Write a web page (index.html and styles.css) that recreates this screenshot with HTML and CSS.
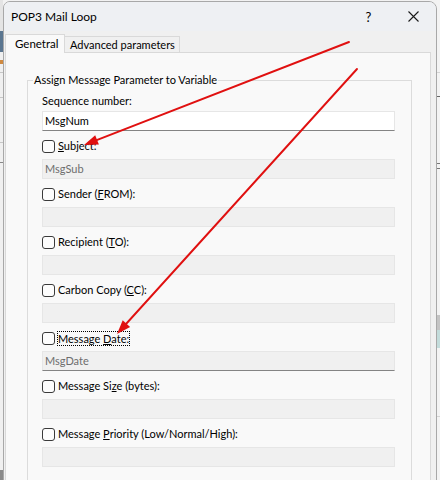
FILE: index.html
```html
<!DOCTYPE html>
<html>
<head>
<meta charset="utf-8">
<link rel="stylesheet" href="styles.css">
</head>
<body>
<div class="desk">
  <div class="dialog">
    <div class="titlebar">
      <span class="title">POP3 Mail Loop</span>
      <span class="tbtn help">?</span>
      <span class="tbtn close"><svg width="11" height="11" viewBox="0 0 11 11"><path d="M0.5 0.5 L10.5 10.5 M10.5 0.5 L0.5 10.5" stroke="#1a1a1a" stroke-width="1.1" fill="none"/></svg></span>
    </div>
    <div class="body">
      <div class="tabs">
        <div class="tab active">Genetral</div>
        <div class="tab">Advanced parameters</div>
      </div>
      <div class="panel">
        <fieldset class="group">
          <legend>Assign Message Parameter to Variable</legend>
          <div class="fields">
            <div class="label">Sequence number:</div>
            <div class="input enabled">MsgNum</div>

            <div class="check"><span class="box"></span><span><u>S</u>ubject:</span></div>
            <div class="input disabled">MsgSub</div>

            <div class="check"><span class="box"></span><span>Sender (<u>F</u>ROM):</span></div>
            <div class="input disabled"></div>

            <div class="check"><span class="box"></span><span>Recipient (<u>T</u>O):</span></div>
            <div class="input disabled"></div>

            <div class="check"><span class="box"></span><span>Carbon Copy (<u>C</u>C):</span></div>
            <div class="input disabled"></div>

            <div class="check"><span class="box"></span><span class="focus">Message <u>D</u>ate:</span></div>
            <div class="input disabled dark">MsgDate</div>

            <div class="check"><span class="box"></span><span>Message Si<u>z</u>e (bytes):</span></div>
            <div class="input disabled"></div>

            <div class="check"><span class="box"></span><span>Message <u>P</u>riority (Low/Normal/High):</span></div>
            <div class="input disabled"></div>
          </div>
        </fieldset>
      </div>
    </div>
  </div>
  <svg class="arrows" width="440" height="480" viewBox="0 0 440 480">
    <g stroke="#e01010" stroke-width="1.9" fill="none" stroke-linecap="round">
      <line x1="349" y1="42" x2="96" y2="140.4"/>
      <line x1="357" y1="69" x2="126" y2="324"/>
    </g>
    <g fill="#e01010">
      <polygon points="84,145 98.9,144.6 95.2,135.3"/>
      <polygon points="117,334 130.1,327 122.7,320.3"/>
    </g>
  </svg>
</div>
</body>
</html>
```

FILE: styles.css
```css
html, body {
  margin: 0;
  padding: 0;
}
body {
  font-family: Lato, "Noto Sans", sans-serif;
  font-size: 11px;
  color: #000;
  background: #e9e9e9;
}
.desk {
  position: relative;
  width: 440px;
  height: 480px;
  overflow: hidden;
  background: #f2f2f2;
  padding: 1px 0 0 3px;
  box-sizing: border-box;
}
.desk::before {
  content: "";
  position: absolute;
  left: 0;
  top: 0;
  width: 3px;
  height: 480px;
  background: linear-gradient(to bottom,
    #e4e4e4 0, #e4e4e4 31px,
    #5b7690 31px, #5b7690 52px,
    #f0f0f0 52px, #f0f0f0 60px,
    #d08a40 60px, #d08a40 64px,
    #f0f0f0 64px, #f0f0f0 72px,
    #c6c6c6 72px, #c6c6c6 73px,
    #f0f0f0 73px, #f0f0f0 97px,
    #c6c6c6 97px, #c6c6c6 98px,
    #f0f0f0 98px, #f0f0f0 142px,
    #c6c6c6 142px, #c6c6c6 143px,
    #f0f0f0 143px, #f0f0f0 162px,
    #888 162px, #888 163px,
    #f0f0f0 163px, #f0f0f0 470px,
    #8a8a8a 470px);
}
.desk::after {
  content: "";
  position: absolute;
  right: 0;
  top: 0;
  width: 3px;
  height: 480px;
  background: linear-gradient(to bottom,
    #f3f3f3 0, #f3f3f3 72px,
    #d4d4d4 72px, #d4d4d4 73px,
    #f3f3f3 73px, #f3f3f3 96px,
    #666 96px, #666 97px,
    #f3f3f3 97px, #f3f3f3 163px,
    #777 163px, #777 164px,
    #f3f3f3 164px, #f3f3f3 168px,
    #777 168px, #777 169px,
    #f3f3f3 169px, #f3f3f3 315px,
    #c4c4c4 315px, #c4c4c4 330px,
    #c3dcdb 330px, #c3dcdb 348px,
    #f3f3f3 348px, #f3f3f3 416px,
    #d4d4d4 416px, #d4d4d4 417px,
    #f3f3f3 417px);
}
.dialog {
  position: relative;
  z-index: 1;
  width: 434px;
  height: 500px;
  box-sizing: border-box;
  border: 1px solid #a8a8a8;
  border-radius: 7px 8px 0 0;
  background: #f0f0f0;
  overflow: hidden;
}
.titlebar {
  height: 29px;
  display: flex;
  align-items: center;
  padding-left: 7px;
  background: #eef0f3;
}
.title {
  font-size: 12px;
  flex: 1;
}
.tbtn {
  width: 45px;
  height: 29px;
  display: flex;
  align-items: center;
  justify-content: center;
}
.help {
  font-size: 13px;
}
.body {
  padding: 3px 0 0 1px;
}
.tabs {
  display: flex;
  align-items: flex-end;
  height: 19px;
  margin-bottom: -1px;
  position: relative;
  z-index: 1;
}
.tab {
  box-sizing: border-box;
  border: 1px solid #d9d9d9;
  display: flex;
  align-items: center;
  font-size: 11px;
}
.tab.active {
  width: 60px;
  height: 19px;
  border-bottom: none;
  background: #f9f9f9;
  padding: 0 0 1px 9px;
  font-size: 11.5px;
}
.tab:not(.active) {
  width: 115px;
  height: 17px;
  border-left: none;
  background: #f0f0f0;
  padding-left: 5px;
}
.panel {
  width: 426px;
  height: 460px;
  box-sizing: border-box;
  border: 1px solid #d9d9d9;
  background: #f9f9f9;
  padding-top: 19px;
}
.group {
  margin: 0 18px 0 21px;
  padding: 0;
  border: 1px solid #dcdcdc;
  height: 420px;
  min-width: 0;
}
.group legend {
  margin-left: 5px;
  padding: 0 1px;
  line-height: 16px;
}
.fields {
  display: flex;
  flex-direction: column;
  padding: 5px 16px 0 14px;
}
.label {
  height: 16px;
  line-height: 16px;
  margin-bottom: 2px;
}
.input {
  height: 20px;
  box-sizing: border-box;
  border: 1px solid #e6e6e6;
  line-height: 18px;
  padding-left: 2px;
  margin-bottom: 7px;
}
.input.enabled {
  background: #ffffff;
  border-bottom-color: #848484;
}
.input.disabled {
  background: #f0f0f0;
  color: #6d6d6d;
}
.input.dark {
  border-bottom-color: #848484;
}
.check {
  height: 16px;
  display: flex;
  align-items: center;
  margin-bottom: 5px;
  line-height: 16px;
}
.box {
  width: 13px;
  height: 13px;
  box-sizing: border-box;
  border: 1px solid #3a3a3a;
  border-radius: 3px;
  background: #fdfdfd;
  margin-right: 3px;
  flex: none;
}
.focus {
  border: 1px dotted #000;
  line-height: 13px;
  margin-left: -1px;
}
.arrows {
  position: absolute;
  left: 0;
  top: 0;
  z-index: 2;
  pointer-events: none;
}
```
